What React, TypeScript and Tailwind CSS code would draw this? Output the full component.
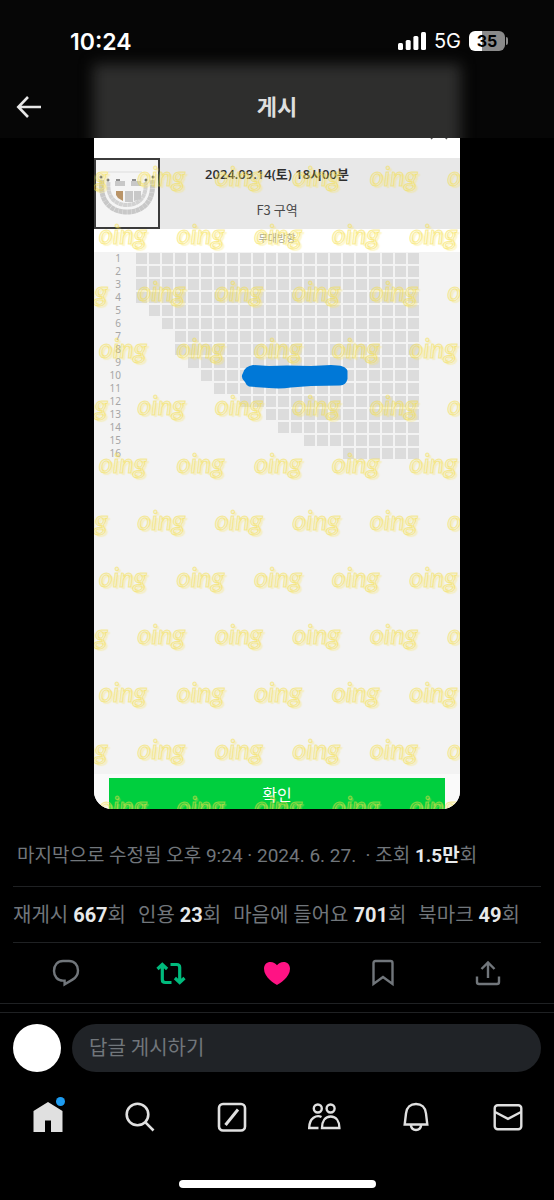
import type { ReactNode } from "react";

const stats = [
  { label: "재게시", value: "667" },
  { label: "인용", value: "23" },
  { label: "마음에 들어요", value: "701" },
  { label: "북마크", value: "49" },
];

// index of the first seat in each row, every row ends at seat 22
const seatStarts = [0, 0, 0, 0, 1, 2, 3, 3, 4, 5, 6, 8, 10, 11, 13, 16];
const seatCount = 22;

const actions = [
  { label: "답글", icon: <ReplyIcon /> },
  { label: "재게시", icon: <RepostIcon /> },
  { label: "마음에 들어요", icon: <HeartIcon /> },
  { label: "북마크", icon: <BookmarkIcon /> },
  { label: "공유", icon: <ShareIcon /> },
];

const tabs = [
  { label: "홈", icon: <HomeIcon />, dot: true },
  { label: "검색", icon: <SearchIcon /> },
  { label: "Grok", icon: <GrokIcon /> },
  { label: "커뮤니티", icon: <PeopleIcon /> },
  { label: "알림", icon: <BellIcon /> },
  { label: "쪽지", icon: <MailIcon /> },
];

function ReplyIcon() {
  return (
    <svg width="28" height="28" viewBox="0 0 28 28" fill="none" stroke="#71767b" strokeWidth="2.400">
      <path d="M11 2H17C22.400 2 26 6 26 11.400C26 15.600 24 18.500 20.500 20.600L12.600 25.300V21.600H11C5.600 21.600 2 17.400 2 12C2 6 5.600 2 11 2Z" />
    </svg>
  );
}

function RepostIcon() {
  return (
    <svg width="30" height="28" viewBox="0 0 30 28" fill="none" stroke="#00ba7c" strokeWidth="3.200">
      <path d="M1.500 10L6.300 5.500L11.100 10M6.300 6.500V20.500Q6.300 23.500 9.300 23.500H15.500M28.500 19L23.700 23.500L18.900 19M23.700 22.500V8.500Q23.700 5.500 20.700 5.500H14.500" />
    </svg>
  );
}

function HeartIcon() {
  return (
    <svg width="28" height="28" viewBox="0 0 28 28" fill="#ff1384">
      <path d="M14 26C12 25 1 18.500 1 9.800C1 5.700 3.800 3 7.400 3C10.300 3 12.600 4.400 14 6.200C15.400 4.400 17.700 3 20.600 3C24.200 3 27 5.700 27 9.800C27 18.500 16 25 14 26Z" />
    </svg>
  );
}

function BookmarkIcon() {
  return (
    <svg width="28" height="28" viewBox="0 0 28 28" fill="none" stroke="#71767b" strokeWidth="2.400">
      <path d="M4.500 4Q4.500 2 6.500 2H21.500Q23.500 2 23.500 4V25L14 18L4.500 25Z" />
    </svg>
  );
}

function ShareIcon() {
  return (
    <svg width="28" height="28" viewBox="0 0 28 28" fill="none" stroke="#71767b" strokeWidth="2.400">
      <path d="M14 19V4M7.500 10L14 3.500L20.500 10M3 17.500V23Q3 25 5 25H23Q25 25 25 23V17.500" />
    </svg>
  );
}

function HomeIcon() {
  return (
    <svg width="30" height="32" viewBox="0 0 30 32" fill="#e0e0e0">
      <path d="M15 1L29.500 10V31H18V19.500H12V31H.5V10Z" />
    </svg>
  );
}

function SearchIcon() {
  return (
    <svg width="30" height="32" viewBox="0 0 30 32" fill="none" stroke="#e0e0e0" strokeWidth="2.600">
      <circle cx="12.500" cy="13.500" r="10.800" />
      <path d="M20.200 21.200L28.500 29.500" />
    </svg>
  );
}

function GrokIcon() {
  return (
    <svg width="30" height="32" viewBox="0 0 30 32" fill="none" stroke="#e0e0e0" strokeWidth="2.600">
      <rect x="2" y="3" width="26" height="26.500" rx="4" />
      <path d="M8.500 24L21 8.500" strokeWidth="3" />
    </svg>
  );
}

function PeopleIcon() {
  return (
    <svg width="34" height="32" viewBox="0 0 34 32" fill="none" stroke="#e0e0e0" strokeWidth="2.400">
      <circle cx="10.800" cy="7.500" r="4" />
      <circle cx="23.600" cy="7.500" r="4" />
      <path d="M14.500 16C12.500 15 9 15 6.500 16.800C3.500 19 2.200 22.500 2.200 27H11.500M15 27C15 20 18.300 15.500 23.700 15.500C29 15.500 32.400 20 32.400 27Z" />
    </svg>
  );
}

function BellIcon() {
  return (
    <svg width="30" height="32" viewBox="0 0 30 32" fill="none" stroke="#e0e0e0" strokeWidth="2.400">
      <path d="M3.700 23.500L5 12.500C5.600 6.500 9.600 3 15 3C20.400 3 24.400 6.500 25 12.500L26.300 23.500ZM9.800 24C10.800 30.600 19.200 30.600 20.200 24" />
    </svg>
  );
}

function MailIcon() {
  return (
    <svg width="30" height="32" viewBox="0 0 30 32" fill="none" stroke="#e0e0e0" strokeWidth="2.400">
      <rect x="1.700" y="4.200" width="26.600" height="24" rx="3" />
      <path d="M2 11L15 17.800L28 11" />
    </svg>
  );
}

function StatusBar() {
  return (
    <div className="flex h-14 items-end justify-between pr-[46px] pl-[70px] text-white">
      <span className="h-[30px] font-[Inter] text-[23px] leading-8 font-semibold">10:24</span>
      <div className="flex h-[30px] items-center gap-2">
        <svg width="28" height="18" viewBox="0 0 28 18" fill="#fff">
          <rect x="0" y="11" width="5" height="7" rx="1.500" />
          <rect x="7.700" y="8" width="5" height="10" rx="1.500" />
          <rect x="15.400" y="4" width="5" height="14" rx="1.500" />
          <rect x="23" y="0" width="5" height="18" rx="1.500" />
        </svg>
        <span className="font-[Inter] text-xl">5G</span>
        <div className="flex items-center gap-px">
          <span className="flex h-5 w-9 items-center justify-center rounded-md bg-linear-to-r from-white from-35% to-[#8a8a8a] to-35% font-[Inter] text-base font-bold text-black">
            35
          </span>
          <span className="h-2 w-0.5 rounded-r-full bg-[#8a8a8a]" />
        </div>
      </div>
    </div>
  );
}

function Header() {
  return (
    <header className="relative h-[138px] overflow-hidden bg-[#060606]">
      <div className="absolute inset-x-[93px] top-[64px] -bottom-6 bg-[#2e2e2d] blur-[7px]" />
      <div className="relative">
        <StatusBar />
        <div className="grid h-[102px] grid-cols-[64px_1fr_64px] items-center">
          <button type="button" aria-label="뒤로" className="pl-4">
            <svg width="26" height="24" viewBox="0 0 26 24" fill="none" stroke="#e7e7e7" strokeWidth="2.600">
              <path d="M25 12H2.500M12 2L2.300 12L12 22" />
            </svg>
          </button>
          <h1 className="text-center text-[22px] font-bold text-[#dedede]">게시</h1>
        </div>
      </div>
    </header>
  );
}

function VenueMap() {
  return (
    <svg width="62" height="67" viewBox="0 0 62 67" fill="none">
      <path d="M6 20C3 41 15 52 31 52S59 41 56 20" stroke="#c8c8c8" strokeWidth="5" strokeDasharray="4 .3" />
      <path d="M12.500 22C11 38 20 45 31 45S51 38 49.500 22" stroke="#d2d2d2" strokeWidth="4" strokeDasharray="4 .3" />
      <path d="M12 12H46" stroke="#ddd" />
      <path d="M19 21H29V26H19ZM35 21H45V26H35ZM29 31H37V42H29ZM38 31H45V39L38 41Z" fill="#c8c8c8" />
      <path d="M20 19H24V21H20ZM36 19H40V21H36Z" fill="#8e8e8e" />
      <path d="M20 31H27V41L22 38L20 35Z" fill="#b99468" />
      <circle cx="5" cy="17" r="1.500" fill="#777" />
      <circle cx="12" cy="20" r="1.500" fill="#777" />
      <circle cx="50" cy="20" r="1.500" fill="#777" />
      <circle cx="57" cy="17" r="1.500" fill="#777" />
    </svg>
  );
}

function WatermarkRow({ count }: { count: number }) {
  return Array.from({ length: count }, (_, i) => (
    <span key={i} className="flex items-center justify-center">
      oing
    </span>
  ));
}

function Watermark() {
  return (
    <div
      aria-hidden="true"
      className="pointer-events-none absolute top-[10px] left-0 grid h-[687px] grid-rows-12 font-[Lato] text-[27px] font-medium text-[#f8e24a]/20 italic [-webkit-text-stroke:1px_rgb(245_222_70_/_0.5)] [text-shadow:2px_2px_1px_rgb(248_230_90_/_0.3)]"
    >
      {Array.from({ length: 12 }, (_, row) =>
        row % 2 ? (
          <div key={row} className="-ml-[10px] grid w-[388px] grid-cols-5">
            <WatermarkRow count={5} />
          </div>
        ) : (
          <div key={row} className="-ml-[49px] grid w-[465px] grid-cols-6">
            <WatermarkRow count={6} />
          </div>
        ),
      )}
    </div>
  );
}

function SeatMap() {
  return (
    <div className="flex h-[522px] bg-[#f3f3f3]">
      <div className="w-[27px] text-right font-['Noto_Sans'] text-[10px] text-[#a6a6a6]">
        {seatStarts.map((_, row) => (
          <div key={row} className="h-[13px] leading-[13px]">
            {row + 1}
          </div>
        ))}
      </div>
      <div className="mt-px ml-[15px] flex w-[283px] flex-col gap-0.5">
        {seatStarts.map((start, row) => (
          <div key={row} className="grid h-[11px] grid-cols-22 gap-0.5">
            {Array.from({ length: seatCount }, (_, seat) => (
              <span key={seat} className={seat >= start ? "bg-[#dcdcdc]" : ""} />
            ))}
          </div>
        ))}
      </div>
    </div>
  );
}

function TicketImage() {
  return (
    <div className="relative mx-[94px] overflow-hidden rounded-b-[18px] bg-white">
      <div className="relative h-5 overflow-hidden">
        <svg width="18" height="18" viewBox="0 0 18 18" className="absolute -top-4 right-3" stroke="#555" strokeWidth="1.500">
          <path d="M1 1L17 17M17 1L1 17" />
        </svg>
      </div>
      <div className="grid grid-cols-[66px_1fr_66px] bg-[#e8e8e8]">
        <div className="h-[71px] border-2 border-[#3c3c3c] bg-[#f5f5f5]">
          <VenueMap />
        </div>
        <div className="flex flex-col items-center pt-1 whitespace-nowrap text-[#4a4a4a]">
          <p className="h-9 font-['Open_Sans','Noto_Sans_CJK_KR',sans-serif] text-[13px] leading-6 font-semibold text-[#2e2e2e]">
            2024.09.14(토) 18시00분
          </p>
          <p className="font-['Noto_Sans_CJK_KR',sans-serif] text-[13px] leading-6">F3 구역</p>
        </div>
      </div>
      <p className="h-[23px] text-center text-[10px] leading-5 text-[#a0a0a0]">무대방향</p>
      <SeatMap />
      <div className="bg-[#fafafa] px-[15px] pt-1">
        <button type="button" className="h-[31px] w-full bg-[#00cf3e] pt-1 text-base leading-6 text-white">
          확인
        </button>
      </div>
      <Watermark />
      <svg width="108" height="26" viewBox="0 0 108 26" className="absolute top-[226px] left-[147px]" fill="#0078d7">
        <path d="M2 9Q4 2 12 1L28 2L46 1.500L70 2L90 1Q105 1 106.500 7V15Q105 21 99 21.500L70 22L50 23.500Q40 25 28 24L8 22.500Q5 21 4 18Q-1 14 2 9Z" />
      </svg>
    </div>
  );
}

function IconButton({ label, children }: { label: string; children: ReactNode }) {
  return (
    <button type="button" aria-label={label} className="flex items-center justify-center">
      {children}
    </button>
  );
}

export default function App() {
  return (
    <div className="flex min-h-screen flex-col bg-black font-[Roboto,'Noto_Sans_CJK_KR',sans-serif] text-[#71767b]">
      <Header />
      <main>
        <TicketImage />
        <div className="mx-[13px] whitespace-nowrap">
          <p className="mt-7 ml-1 h-[49px] text-[19px] leading-[38px]">
            마지막으로 수정됨 오후 9:24 · 2024. 6. 27. &nbsp;· 조회{" "}
            <strong className="font-bold text-[#e7e9ea]">1.5만</strong>회
          </p>
          <div className="flex h-[57px] items-center gap-3 border-y border-[#1f2123] text-xl">
            {stats.map((stat) => (
              <span key={stat.label}>
                {stat.label} <strong className="font-bold text-[#e7e9ea]">{stat.value}</strong>회
              </span>
            ))}
          </div>
          <div className="grid h-[60px] grid-cols-5">
            {actions.map((action) => (
              <IconButton key={action.label} label={action.label}>
                {action.icon}
              </IconButton>
            ))}
          </div>
        </div>
        <div className="h-[10px] border-y border-[#1f2123]" />
      </main>
      <div className="flex items-center gap-[11px] px-[13px] pt-[11px]">
        <div className="size-12 shrink-0 rounded-full bg-white" />
        <input
          aria-label="답글 게시하기"
          placeholder="답글 게시하기"
          className="h-12 min-w-0 flex-1 rounded-full bg-[#202327] px-[17px] text-xl outline-none placeholder:text-[#71767b]"
        />
      </div>
      <nav className="grid h-[90px] grid-cols-6 pl-0.5">
        {tabs.map((tab) => (
          <a key={tab.label} href="#" aria-label={tab.label} className="flex items-center justify-center">
            <span className="relative">
              {tab.icon}
              {tab.dot && <span className="absolute -top-1 -right-0.5 size-[9px] rounded-full bg-[#1d9bf0]" />}
            </span>
          </a>
        ))}
      </nav>
      <div className="mx-auto mt-[18px] mb-[11px] h-2 w-[197px] rounded-full bg-white" />
    </div>
  );
}
